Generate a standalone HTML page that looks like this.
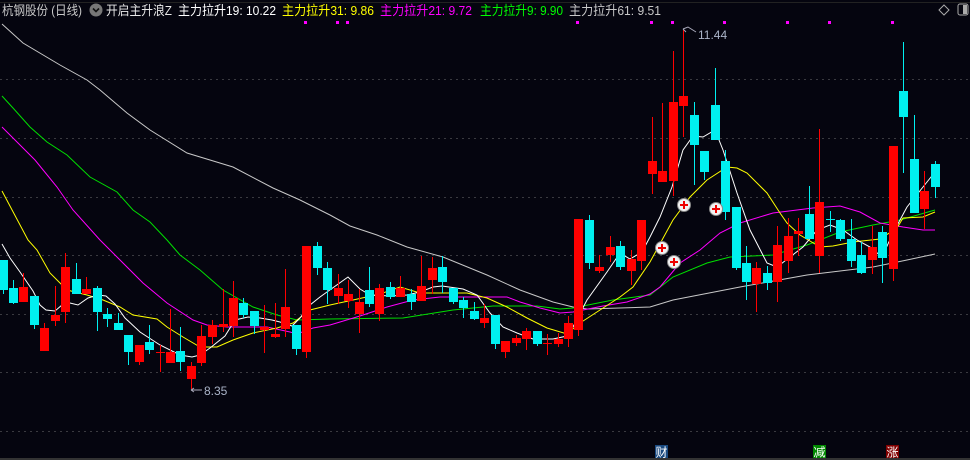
<!DOCTYPE html>
<html><head><meta charset="utf-8"><style>
html,body{margin:0;padding:0;background:#05050f;width:970px;height:460px;overflow:hidden}
svg{display:block}
text{font-family:"Liberation Sans","Noto Sans CJK SC",sans-serif}
</style></head><body>
<svg width="970" height="460" viewBox="0 0 970 460" xmlns="http://www.w3.org/2000/svg">
<rect width="970" height="460" fill="#05050f"/>
<g stroke="#3a3a40" stroke-width="1" stroke-dasharray="2,4">
<line x1="0" y1="79.5" x2="970" y2="79.5"/><line x1="0" y1="138.5" x2="970" y2="138.5"/>
<line x1="0" y1="197.5" x2="970" y2="197.5"/><line x1="0" y1="255.5" x2="970" y2="255.5"/>
<line x1="0" y1="314.5" x2="970" y2="314.5"/><line x1="0" y1="372.5" x2="970" y2="372.5"/>
<line x1="0" y1="431.5" x2="970" y2="431.5"/>
</g>
<line x1="0" y1="459" x2="970" y2="459" stroke="#333" stroke-width="2"/>
<line x1="0" y1="2.5" x2="970" y2="2.5" stroke="#222" stroke-width="1"/>
<!-- MA lines -->
<g fill="none" stroke-width="1">
<polyline stroke="#c8c8c8" points="2,24 23,43 60,65 87,80 100,90 127,113 150,130 187,153 233,167 273,188 300,200 330,215 350,226 377,235 407,247 443,257 487,275 520,290 553,302 573,307 587,309 650,307 673,300 740,287 807,275 873,267 907,260 935,254"/>
<polyline stroke="#00e000" points="2,96 13,108 30,127 47,142 67,155 90,177 117,192 133,210 150,222 167,240 180,255 200,270 223,290 253,307 277,315 297,320 330,319 403,318 453,310 493,306 537,306 560,309 573,308 613,300 650,295 673,277 707,263 730,257 773,255 807,245 840,232 873,225 900,220 935,210"/>
<polyline stroke="#ff00ff" points="2,127 17,142 35,160 57,187 73,210 100,240 117,257 143,283 167,303 193,320 207,325 227,327 267,327 290,332 297,334 313,328 330,325 360,316 387,307 413,300 440,297 487,297 507,297 520,302 540,308 560,313 573,312 603,306 627,302 650,294 660,287 680,263 700,250 720,233 740,223 773,213 813,208 840,206 860,212 880,223 903,227 923,230 935,230"/>
<polyline stroke="#ffff00" points="2,191 28,240 37,250 50,273 67,290 87,295 103,300 120,307 133,315 157,319 167,327 183,337 200,347 217,347 233,340 253,333 277,328 293,323 310,310 330,305 353,300 380,294 400,287 420,293 467,293 487,298 507,307 527,318 547,328 567,334 580,323 600,310 620,297 633,287 650,262 673,220 690,197 707,180 727,167 737,168 747,173 767,193 780,213 787,223 800,235 820,247 833,246 853,242 880,239 897,228 903,218 923,217 935,212"/>
<polyline stroke="#ffffff" points="2,244 10,258 20,272 33,291 40,305 46,310 55,311 62,305 70,303 78,305 88,298 98,295 106,296 115,304 125,318 140,332 160,345 180,355 192,357 200,355 210,348 225,336 235,320 248,317 260,318 272,320 280,322 292,326 300,318 310,305 320,297 348,277 360,289 370,295 390,296 407,295 420,292 433,287 442,286 463,289 477,295 490,313 503,327 517,333 533,339 553,339 567,336 573,327 587,300 607,272 620,253 630,259 642,252 650,237 660,217 672,187 683,150 693,136 703,137 715,130 723,150 737,193 750,230 767,263 777,267 790,257 803,247 817,230 830,225 843,230 857,240 870,247 882,257 893,233 907,207 923,187 935,172"/>
</g>
<!-- wicks -->
<path stroke="#00f0f0" stroke-width="1" fill="none" d="M3.5,260V294M13.5,280V304M34.5,296V329M76.5,263V294M97.5,286V331M107.5,308V327M118.5,313V330M128.5,335V365M149.5,325V354M180.5,327V371M243.5,298V318M254.5,311V334M296.5,325V355M317.5,242V275M327.5,262V304M369.5,267V307M390.5,282V299M411.5,289V310M442.5,256V293M453.5,288V304M463.5,297V318M474.5,302V320M495.5,315V349M537.5,331V346M589.5,215V269M620.5,241V270M694.5,102V185M704.5,151V180M715.5,68V140M725.5,150V220M736.5,207V270M746.5,246V300M767.5,266V290M809.5,186V239M830.5,211V232M840.5,219V241M851.5,219V267M861.5,242V274M882.5,226V283M903.5,42V173M914.5,115V213M935.5,161V198"/>
<path stroke="#ff0000" stroke-width="1" fill="none" d="M23.5,273V302M44.5,323V351M55.5,286V326M65.5,253V323M86.5,277V294M139.5,345V365M160.5,345V372M170.5,309V363M191.5,362V389M201.5,325V366M212.5,320V344M223.5,289V332M233.5,281V337M264.5,305V353M275.5,303V338M285.5,269V337M306.5,246V358M338.5,274V304M348.5,280V308M359.5,289V333M379.5,284V321M400.5,276V297M421.5,256V301M432.5,257V294M484.5,304V328M505.5,341V358M516.5,335V346M526.5,328V350M547.5,334V355M558.5,333V347M568.5,316V347M578.5,219V336M599.5,255V273M610.5,236V262M631.5,250V285M641.5,220V270M652.5,117V194M662.5,103V182M673.5,51V196M683.5,30V137M756.5,262V312M777.5,226V302M788.5,218V273M798.5,218V256M819.5,129V273M872.5,226V274M893.5,146V281M924.5,171V229"/>
<!-- bodies -->
<g fill="#00f0f0">
<rect x="0" y="260" width="8" height="30"/><rect x="9" y="288" width="9" height="15"/><rect x="30" y="296" width="9" height="29"/><rect x="72" y="279" width="9" height="15"/><rect x="93" y="288" width="9" height="24"/><rect x="103" y="314" width="9" height="5"/><rect x="114" y="323" width="9" height="7"/><rect x="124" y="335" width="9" height="17"/><rect x="145" y="342" width="9" height="8"/><rect x="176" y="351" width="9" height="11"/><rect x="239" y="303" width="9" height="12"/><rect x="250" y="311" width="9" height="15"/><rect x="292" y="325" width="9" height="24"/><rect x="313" y="246" width="9" height="22"/><rect x="323" y="268" width="9" height="22"/><rect x="365" y="290" width="9" height="14"/><rect x="386" y="287" width="9" height="10"/><rect x="407" y="294" width="9" height="8"/><rect x="438" y="267" width="9" height="15"/><rect x="449" y="288" width="9" height="14"/><rect x="459" y="300" width="9" height="8"/><rect x="470" y="311" width="9" height="8"/><rect x="491" y="315" width="9" height="29"/><rect x="533" y="331" width="9" height="13"/><rect x="585" y="220" width="9" height="43"/><rect x="616" y="246" width="9" height="21"/><rect x="690" y="115" width="9" height="30"/><rect x="700" y="151" width="9" height="21"/><rect x="711" y="105" width="9" height="35"/><rect x="721" y="161" width="9" height="51"/><rect x="732" y="207" width="9" height="61"/><rect x="742" y="263" width="9" height="19"/><rect x="763" y="273" width="9" height="10"/><rect x="805" y="214" width="9" height="25"/><rect x="826" y="219" width="9" height="1"/><rect x="836" y="220" width="9" height="19"/><rect x="847" y="239" width="9" height="22"/><rect x="857" y="255" width="9" height="18"/><rect x="878" y="232" width="9" height="26"/><rect x="899" y="91" width="9" height="26"/><rect x="910" y="159" width="9" height="54"/><rect x="931" y="164" width="9" height="23"/>
</g>
<g fill="#ff0000">
<rect x="19" y="287" width="9" height="15"/><rect x="40" y="328" width="9" height="23"/><rect x="51" y="315" width="9" height="6"/><rect x="61" y="267" width="9" height="45"/><rect x="82" y="289" width="9" height="5"/><rect x="135" y="345" width="9" height="17"/><rect x="156" y="352" width="9" height="1"/><rect x="166" y="352" width="9" height="11"/><rect x="187" y="366" width="9" height="13"/><rect x="197" y="336" width="9" height="27"/><rect x="208" y="325" width="9" height="12"/><rect x="219" y="324" width="9" height="3"/><rect x="229" y="298" width="9" height="28"/><rect x="260" y="327" width="9" height="3"/><rect x="271" y="334" width="9" height="3"/><rect x="281" y="307" width="9" height="22"/><rect x="302" y="246" width="9" height="106"/><rect x="334" y="288" width="9" height="8"/><rect x="344" y="294" width="9" height="7"/><rect x="355" y="302" width="9" height="12"/><rect x="375" y="288" width="9" height="26"/><rect x="396" y="288" width="9" height="9"/><rect x="417" y="286" width="9" height="15"/><rect x="428" y="268" width="9" height="12"/><rect x="480" y="318" width="9" height="5"/><rect x="501" y="341" width="9" height="11"/><rect x="512" y="338" width="9" height="5"/><rect x="522" y="331" width="9" height="8"/><rect x="543" y="343" width="9" height="1"/><rect x="554" y="339" width="9" height="5"/><rect x="564" y="323" width="9" height="16"/><rect x="574" y="219" width="9" height="111"/><rect x="595" y="267" width="9" height="4"/><rect x="606" y="247" width="9" height="8"/><rect x="627" y="259" width="9" height="12"/><rect x="637" y="220" width="9" height="41"/><rect x="648" y="161" width="9" height="13"/><rect x="658" y="171" width="9" height="11"/><rect x="669" y="102" width="9" height="79"/><rect x="679" y="96" width="9" height="10"/><rect x="752" y="268" width="9" height="16"/><rect x="773" y="245" width="9" height="37"/><rect x="784" y="236" width="9" height="25"/><rect x="794" y="231" width="9" height="3"/><rect x="815" y="202" width="9" height="54"/><rect x="868" y="247" width="9" height="13"/><rect x="889" y="146" width="9" height="123"/><rect x="920" y="191" width="9" height="18"/>
</g>
<!-- plus markers -->
<g>
<g transform="translate(662,248)"><circle r="6.5" fill="#f2f2f2" stroke="#888"/><path d="M-4,0H4M0,-4V4" stroke="#e00" stroke-width="2"/></g>
<g transform="translate(674,262)"><circle r="6.5" fill="#f2f2f2" stroke="#888"/><path d="M-4,0H4M0,-4V4" stroke="#e00" stroke-width="2"/></g>
<g transform="translate(684,205)"><circle r="6.5" fill="#f2f2f2" stroke="#888"/><path d="M-4,0H4M0,-4V4" stroke="#e00" stroke-width="2"/></g>
<g transform="translate(716,209)"><circle r="6.5" fill="#f2f2f2" stroke="#888"/><path d="M-4,0H4M0,-4V4" stroke="#e00" stroke-width="2"/></g>
</g>
<!-- magenta dots -->
<g fill="#ff00ff">
<rect x="304" y="21" width="3" height="3"/><rect x="336" y="21" width="3" height="3"/><rect x="346" y="21" width="3" height="3"/><rect x="576" y="21" width="3" height="3"/><rect x="650" y="21" width="3" height="3"/><rect x="671" y="21" width="3" height="3"/><rect x="723" y="21" width="3" height="3"/><rect x="786" y="21" width="3" height="3"/><rect x="828" y="21" width="3" height="3"/><rect x="891" y="21" width="3" height="3"/>
</g>
<!-- labels -->
<path d="M191,390H202M191,390l3,-2M191,390l3,2" stroke="#aab" fill="none"/>
<text x="204" y="395" font-size="12" fill="#aab4c8">8.35</text>
<path d="M683,29l5,-2l8,5M683,29l3,3" stroke="#aab" fill="none"/>
<text x="698" y="39" font-size="12" fill="#aab4c8">11.44</text>
<!-- header -->
<g font-size="13">
<text x="2" y="15" fill="#c8c8c8" textLength="80" lengthAdjust="spacingAndGlyphs">杭钢股份 (日线)</text>
<circle cx="96" cy="10" r="6.5" fill="#777"/>
<path d="M93,8.5l3,3l3,-3" stroke="#111" stroke-width="1.6" fill="none"/>
<text x="106" y="15" fill="#e8e8e8" textLength="66" lengthAdjust="spacingAndGlyphs">开启主升浪Z</text>
<text x="178" y="15" fill="#ffffff" textLength="98" lengthAdjust="spacingAndGlyphs">主力拉升19: 10.22</text>
<text x="282" y="15" fill="#ffff00" textLength="92" lengthAdjust="spacingAndGlyphs">主力拉升31: 9.86</text>
<text x="380" y="15" fill="#ff00ff" textLength="92" lengthAdjust="spacingAndGlyphs">主力拉升21: 9.72</text>
<text x="480" y="15" fill="#00ff00" textLength="83" lengthAdjust="spacingAndGlyphs">主力拉升9: 9.90</text>
<text x="569" y="15" fill="#c8c8c8" textLength="92" lengthAdjust="spacingAndGlyphs">主力拉升61: 9.51</text>
</g>
<path d="M944,5l5,5l-5,5l-5,-5z" stroke="#aaa" fill="none"/>
<rect x="958" y="4" width="10" height="11" rx="2" stroke="#aaa" fill="none"/>
<rect x="963" y="5" width="4" height="9" fill="#aaa"/>
<!-- bottom tags -->
<rect x="655" y="445" width="13" height="13" fill="#1a4a80"/>
<text x="655.5" y="456.5" font-size="12" fill="#fff">财</text>
<rect x="813" y="445" width="13" height="13" fill="#008800"/>
<text x="813.5" y="456.5" font-size="12" fill="#fff">减</text>
<rect x="886" y="445" width="13" height="13" fill="#800000"/>
<text x="886.5" y="456.5" font-size="12" fill="#fff">涨</text>
</svg>
</body></html>
